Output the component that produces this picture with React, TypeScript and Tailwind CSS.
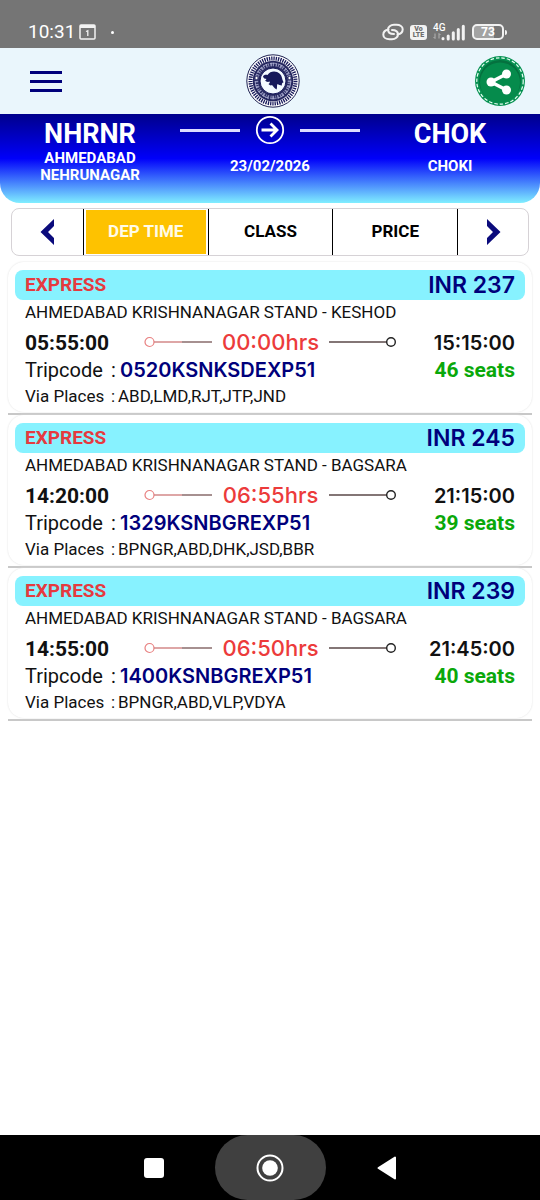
import React, { useState } from 'react';

interface Trip {
  service: string;
  fare: string;
  route: string;
  departure: string;
  duration: string;
  arrival: string;
  tripcode: string;
  seats: number;
  via: string;
}

const trips: Trip[] = [
  {
    service: 'EXPRESS', fare: 'INR 237', route: 'AHMEDABAD KRISHNANAGAR STAND - KESHOD',
    departure: '05:55:00', duration: '00:00hrs', arrival: '15:15:00',
    tripcode: '0520KSNKSDEXP51', seats: 46, via: 'ABD,LMD,RJT,JTP,JND',
  },
  {
    service: 'EXPRESS', fare: 'INR 245', route: 'AHMEDABAD KRISHNANAGAR STAND - BAGSARA',
    departure: '14:20:00', duration: '06:55hrs', arrival: '21:15:00',
    tripcode: '1329KSNBGREXP51', seats: 39, via: 'BPNGR,ABD,DHK,JSD,BBR',
  },
  {
    service: 'EXPRESS', fare: 'INR 239', route: 'AHMEDABAD KRISHNANAGAR STAND - BAGSARA',
    departure: '14:55:00', duration: '06:50hrs', arrival: '21:45:00',
    tripcode: '1400KSNBGREXP51', seats: 40, via: 'BPNGR,ABD,VLP,VDYA',
  },
];

const sortTabs = ['DEP TIME', 'CLASS', 'PRICE'];

const StatusBar: React.FC = () => (
  <div className="flex h-12 items-end justify-between bg-[#757575] pr-[33px] pb-[6px] pl-7 text-white">
    <div className="flex h-5 items-center">
      <span className="text-[19px] leading-5">10:31</span>
      <svg className="ml-[4px]" width="17" height="16" viewBox="0 0 17 16" fill="none">
        <rect x="1" y="1" width="15" height="14" rx="1" stroke="#f2f2f2" strokeWidth="1.5" />
        <path d="M1 1h15v3H1z" fill="#f2f2f2" />
        <path d="M7 7.5 8.8 6.8V12" stroke="#f2f2f2" strokeWidth="1.3" />
      </svg>
      <span className="ml-[15px] h-[3px] w-[3px] rounded-full bg-white" />
    </div>
    <div className="flex h-5 items-center">
      <svg width="22" height="18" viewBox="0 0 22 18" fill="none" stroke="#f2f2f2" strokeWidth="2" strokeLinecap="round">
        <path d="M15.5 11.500C18.500 11 20.700 9 20.700 6.300 20.700 3.500 18 1.800 14.500 1.800H12C8.500 1.800 6 4 6 6.500 6 9.500 8.500 11 12 11" />
        <path d="M6.500 6.500C3.500 7 1.300 9 1.300 11.700 1.300 14.500 4 16.200 7.500 16.200H10C13.500 16.200 16 14 16 11.500 16 8.500 13.500 7 10 7" />
      </svg>
      <div className="ml-[6px] flex h-[15px] w-[17px] flex-col items-center justify-center rounded-[3px] bg-[#f2f2f2] text-[7px] leading-[6px] font-black text-[#6d6d6d]">
        <span>Vo</span>
        <span>LTE</span>
      </div>
      <div className="ml-[6px] flex h-[18px] w-[11px] flex-col">
        <span className="text-[10px] leading-[9px] font-medium">4G</span>
        <svg width="10" height="8" viewBox="0 0 10 8" stroke="#b5b5b5" strokeWidth="1" fill="none">
          <path d="M2 6.500V1.500M.5 5 2 6.500M6 1.500v5M6 1.500 7.500 3" />
        </svg>
      </div>
      <svg className="-ml-[3px]" width="24" height="17" viewBox="0 0 24 17" stroke="#f2f2f2" strokeWidth="3" strokeLinecap="round">
        <path d="M2 14.500v.3M7.200 12v3M12.300 8.800V15M17.300 5.500V15M22.300 2.300V15" />
      </svg>
      <div className="ml-[7px] flex h-4 w-8 items-center justify-center rounded-[5px] border-2 border-[#f2f2f2] bg-linear-to-r from-[#a3a3a3] from-70% to-[#757575] to-70% text-[12px] leading-3 font-bold">
        73
      </div>
      <span className="ml-px h-[5px] w-[2px] rounded-r bg-[#f2f2f2]" />
    </div>
  </div>
);

const Emblem: React.FC = () => (
  <svg width="54" height="54" viewBox="0 0 54 54" fill="none" role="img" aria-label="Emblem">
    <circle cx="27" cy="27" r="26.200" fill="#fff" stroke="#1d2050" strokeWidth="1" />
    <circle cx="27" cy="27" r="22.500" stroke="#17195a" strokeWidth="4" strokeDasharray="1.300 1" />
    <circle cx="27" cy="27" r="20.300" fill="#25275f" />
    <circle cx="27" cy="27" r="16.500" stroke="#9395bd" strokeWidth="3.500" strokeDasharray="1.400 1 .8 1.300 2 .8 1.100 1.600" />
    <circle cx="27" cy="27" r="17.800" stroke="#b9bbda" strokeWidth="0.7" strokeDasharray="7 2 5 2" />
    <circle cx="10.500" cy="24" r="1.700" fill="#fff" stroke="#25275f" />
    <circle cx="43.500" cy="24" r="1.700" fill="#fff" stroke="#25275f" />
    <circle cx="27" cy="27" r="13" fill="#f4faff" stroke="#17195a" strokeWidth="1" />
    <path
      d="M17 22.500c.5-1.500 2.500-2 4.500-1.500 1.500-2.500 4-3.500 6.500-3.500 4.500 0 7.500 3 8 6.500.3 2.500 1.500 3.500 1.500 4.500-1.500 0-2 1.500-1.500 3-2-.5-3.500-.5-4.500-1.500-1 1.500 0 3.500-1 5.500-2-1-3-3-4.500-4.500-1 .8-2.500.3-3.500-1 1-.5 1.500-1.500 1.200-2.500-1.700.8-3.700.3-4.700-1 1-.3 1.500-1 1.200-1.700-1.500.2-2.700-.8-3.200-2.300Z"
      fill="#17195a"
    />
  </svg>
);

const ShareBadge: React.FC = () => (
  <svg width="50" height="50" viewBox="0 0 50 50" fill="none">
    <circle cx="25" cy="25" r="25" fill="#079152" />
    <circle cx="25" cy="25" r="23.200" stroke="#e8fff2" strokeWidth="1.200" strokeDasharray="3.500 2" />
    <circle cx="25" cy="25" r="21" fill="#05713f" />
    <circle cx="25" cy="26.500" r="20" fill="#058b4c" />
    <path d="M31.500 18 16 26l15.500 8" stroke="#fff" strokeWidth="3.500" />
    <circle cx="31.500" cy="18" r="4.500" fill="#fff" />
    <circle cx="16" cy="26" r="4.500" fill="#fff" />
    <circle cx="31.500" cy="34" r="4.500" fill="#fff" />
  </svg>
);

const AppHeader: React.FC = () => (
  <header className="grid h-[66px] grid-cols-3 items-center bg-[#eaf6fc] pr-[15px] pl-[30px]">
    <button aria-label="Menu" className="flex w-8 flex-col gap-[6px]">
      <span className="h-[3px] w-8 bg-[#00007b]" />
      <span className="h-[3px] w-8 bg-[#00007b]" />
      <span className="h-[3px] w-8 bg-[#00007b]" />
    </button>
    <div className="justify-self-center pr-[10px]"><Emblem /></div>
    <button aria-label="Share" className="justify-self-end"><ShareBadge /></button>
  </header>
);

const RouteBanner: React.FC = () => (
  <section className="grid h-[89px] grid-cols-3 rounded-b-[20px] bg-linear-to-b/srgb from-[#00008b] via-[#0000fa] to-[#80eeff] text-center font-bold text-white">
    <div className="flex flex-col items-center pt-[4px]">
      <h1 className="text-[27px] leading-8">NHRNR</h1>
      <p className="w-28 text-[15px] leading-[17px]">AHMEDABAD NEHRUNAGAR</p>
    </div>
    <div className="flex flex-col items-center pt-px">
      <div className="flex w-full items-center justify-between">
        <span className="h-[3px] w-[60px] bg-[#dcdcff]" />
        <svg width="30" height="30" viewBox="0 0 30 30" fill="none" stroke="#fff">
          <circle cx="15" cy="15" r="13.200" strokeWidth="1.800" />
          <path d="M6.500 15h15M15.500 8.500 22 15l-6.500 6.500" strokeWidth="2.800" />
        </svg>
        <span className="h-[3px] w-[60px] bg-[#dcdcff]" />
      </div>
      <p className="mt-3 text-[15px] leading-[18px]">23/02/2026</p>
    </div>
    <div className="flex flex-col items-center pt-[4px]">
      <h1 className="text-[27px] leading-8">CHOK</h1>
      <p className="mt-[7px] text-[15px] leading-[18px]">CHOKI</p>
    </div>
  </section>
);

const SortBar: React.FC = () => {
  const [active, setActive] = useState('DEP TIME');

  return (
    <nav className="mx-[11px] mt-[5px] grid h-12 grid-cols-[71fr_125fr_125fr_125fr_71fr] rounded-lg border border-[#d6d2d6]">
      <button aria-label="Previous" className="flex items-center justify-center">
        <svg width="15" height="28" viewBox="0 0 15 28" fill="#0b0b7c">
          <path d="M14 1v7L8 14l6 6v7L.5 14z" />
        </svg>
      </button>
      {sortTabs.map((tab) => (
        <button
          key={tab}
          onClick={() => setActive(tab)}
          className="border-l border-black px-[2px] py-px text-[17px] font-bold"
        >
          <span className={`flex h-full items-center justify-center ${active === tab ? 'bg-[#fec200] text-[#fffbe8]' : 'text-black'}`}>
            {tab}
          </span>
        </button>
      ))}
      <button aria-label="Next" className="flex items-center justify-center border-l border-black">
        <svg width="15" height="28" viewBox="0 0 15 28" fill="#0b0b7c">
          <path d="M1 1v7l6 6-6 6v7l13.500-13z" />
        </svg>
      </button>
    </nav>
  );
};

const TripCard: React.FC<{ trip: Trip }> = ({ trip }) => (
  <article className="border-b-2 border-[#c8c8c8] pb-px">
    <div className="rounded-2xl px-[7px] pt-[8px] pb-[4px] shadow-[0_0_2px_#dcdcdc]">
      <div className="flex h-[30px] items-center justify-between rounded-lg bg-[#87f2ff] px-[10px]">
        <span className="text-[19px] font-bold text-[#e53a3f]">{trip.service}</span>
        <span className="font-['Inter',sans-serif] text-[23px] font-semibold text-[#00007b]">{trip.fare}</span>
      </div>
      <div className="px-[10px]">
        <p className="text-[17px] leading-6">{trip.route}</p>
        <div className="mt-[4px] flex h-[28px] items-baseline text-[20px] leading-7">
          <span className="flex-1 text-[21px] font-bold">{trip.departure}</span>
          <svg className="self-center" width="68" height="12" viewBox="0 0 68 12" fill="none">
            <circle cx="5.500" cy="6" r="4.500" stroke="#e88080" strokeWidth="1.200" />
            <path d="M10 6h28" stroke="#d08080" strokeWidth="1.400" />
            <path d="M38 6h30" stroke="#806060" strokeWidth="1.400" />
          </svg>
          <span className="w-[117px] text-center font-['Inter',sans-serif] text-[22px] font-medium text-[#ec3b3b]">{trip.duration}</span>
          <svg className="self-center" width="67" height="12" viewBox="0 0 67 12" fill="none">
            <path d="M0 6h58" stroke="#5a4848" strokeWidth="1.300" />
            <circle cx="62" cy="6" r="4.300" stroke="#222" strokeWidth="1.400" />
          </svg>
          <span className="flex-1 text-right font-['Inter',sans-serif] font-semibold">{trip.arrival}</span>
        </div>
        <div className="flex h-[28px] items-baseline justify-between leading-7">
          <p className="flex items-baseline text-[20px]">
            <span className="w-[86px]">Tripcode</span>
            <span className="w-[9px]">:</span>
            <span className="font-['Inter',sans-serif] font-semibold text-[#00007b]">{trip.tripcode}</span>
          </p>
          <span className="text-[21px] font-bold text-[#0aa80a]">{trip.seats} seats</span>
        </div>
        <p className="flex text-[17px] leading-6">
          <span className="w-[86px]">Via Places</span>
          <span className="w-[7px]">:</span>
          <span>{trip.via}</span>
        </p>
      </div>
    </div>
  </article>
);

const SystemNav: React.FC = () => (
  <footer className="flex h-[65px] items-center justify-center bg-black">
    <button aria-label="Recent apps" className="mr-[51px] h-5 w-5 rounded-[3px] bg-white" />
    <button aria-label="Home" className="flex h-full w-[111px] items-center justify-center rounded-full bg-[#404040]">
      <svg width="28" height="28" viewBox="0 0 28 28" fill="none">
        <circle cx="14" cy="14" r="12.500" stroke="#fff" strokeWidth="2" />
        <circle cx="14" cy="14" r="7.800" fill="#fff" />
      </svg>
    </button>
    <button aria-label="Back" className="ml-[51px]">
      <svg width="20" height="24" viewBox="0 0 20 24" fill="#fff" stroke="#fff" strokeWidth="2" strokeLinejoin="round">
        <path d="M18 1.500v21L1.500 12z" />
      </svg>
    </button>
  </footer>
);

const App: React.FC = () => (
  <div className="flex min-h-screen flex-col bg-white font-['Roboto',sans-serif] text-[#111]">
    <StatusBar />
    <AppHeader />
    <RouteBanner />
    <SortBar />
    <main className="mx-2 mt-[6px] flex-1">
      {trips.map((trip) => (
        <TripCard key={trip.tripcode} trip={trip} />
      ))}
    </main>
    <SystemNav />
  </div>
);

export default App;
